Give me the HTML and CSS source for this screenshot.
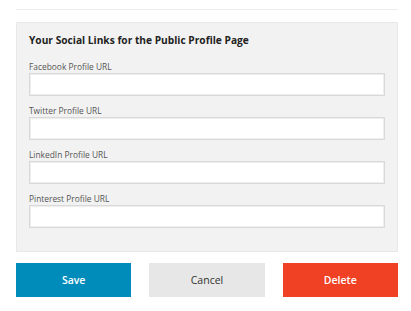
FILE: index.html
```html
<!DOCTYPE html>
<html>
<head>
    <title>Public Profile</title>
    <link rel="stylesheet" href="styles.css">
</head>
<body>
    <div class="page">
        <hr class="divider">

        <div class="social-panel">
            <h3>Your Social Links for the Public Profile Page</h3>

            <div class="field">
                <label for="facebook">Facebook Profile URL</label>
                <input type="text" id="facebook">
            </div>
            <div class="field">
                <label for="twitter">Twitter Profile URL</label>
                <input type="text" id="twitter">
            </div>
            <div class="field">
                <label for="linkedin">LinkedIn Profile URL</label>
                <input type="text" id="linkedin">
            </div>
            <div class="field">
                <label for="pinterest">Pinterest Profile URL</label>
                <input type="text" id="pinterest">
            </div>
        </div>

        <div class="actions">
            <button class="btn btn-save">Save</button>
            <button class="btn btn-cancel">Cancel</button>
            <button class="btn btn-delete">Delete</button>
        </div>
    </div>
</body>
</html>
```

FILE: styles.css
```css
body {
    font-family: "Open Sans", Arial, sans-serif;
    margin: 0;
    background: white;
    color: #333;
}
.page {
    padding: 0 13px 0 16px;
}
.divider {
    margin: 9px 0 12px;
    border: none;
    border-top: 1px solid #ececec;
}
.social-panel {
    background-color: #f2f2f2;
    border: 1px solid #e8e8e8;
    padding: 9px 12px 14px;
}
.social-panel h3 {
    margin: 0 0 13px;
    font-size: 10.2px;
    line-height: 16px;
    font-weight: 700;
    color: #222;
}
.field {
    margin-bottom: 9px;
}
.field label {
    display: block;
    font-size: 8.4px;
    line-height: 12px;
    color: #555;
}
.field input {
    display: block;
    box-sizing: border-box;
    width: 100%;
    height: 23px;
    margin: 0;
    border: 1px solid #d9d9d9;
    box-shadow: inset 0 0 0 1px #eeeeee;
    background: white;
}
.actions {
    display: grid;
    grid-template-columns: repeat(3, 1fr);
    gap: 18px;
    margin-top: 11px;
}
.btn {
    height: 34px;
    border: none;
    font-family: "Open Sans", Arial, sans-serif;
    font-size: 10.5px;
    font-weight: 600;
    cursor: pointer;
}
.btn-save {
    background-color: #008cba;
    color: white;
}
.btn-cancel {
    background-color: #e7e7e7;
    color: #333;
    font-weight: 400;
}
.btn-delete {
    background-color: #f04124;
    color: white;
}
```
